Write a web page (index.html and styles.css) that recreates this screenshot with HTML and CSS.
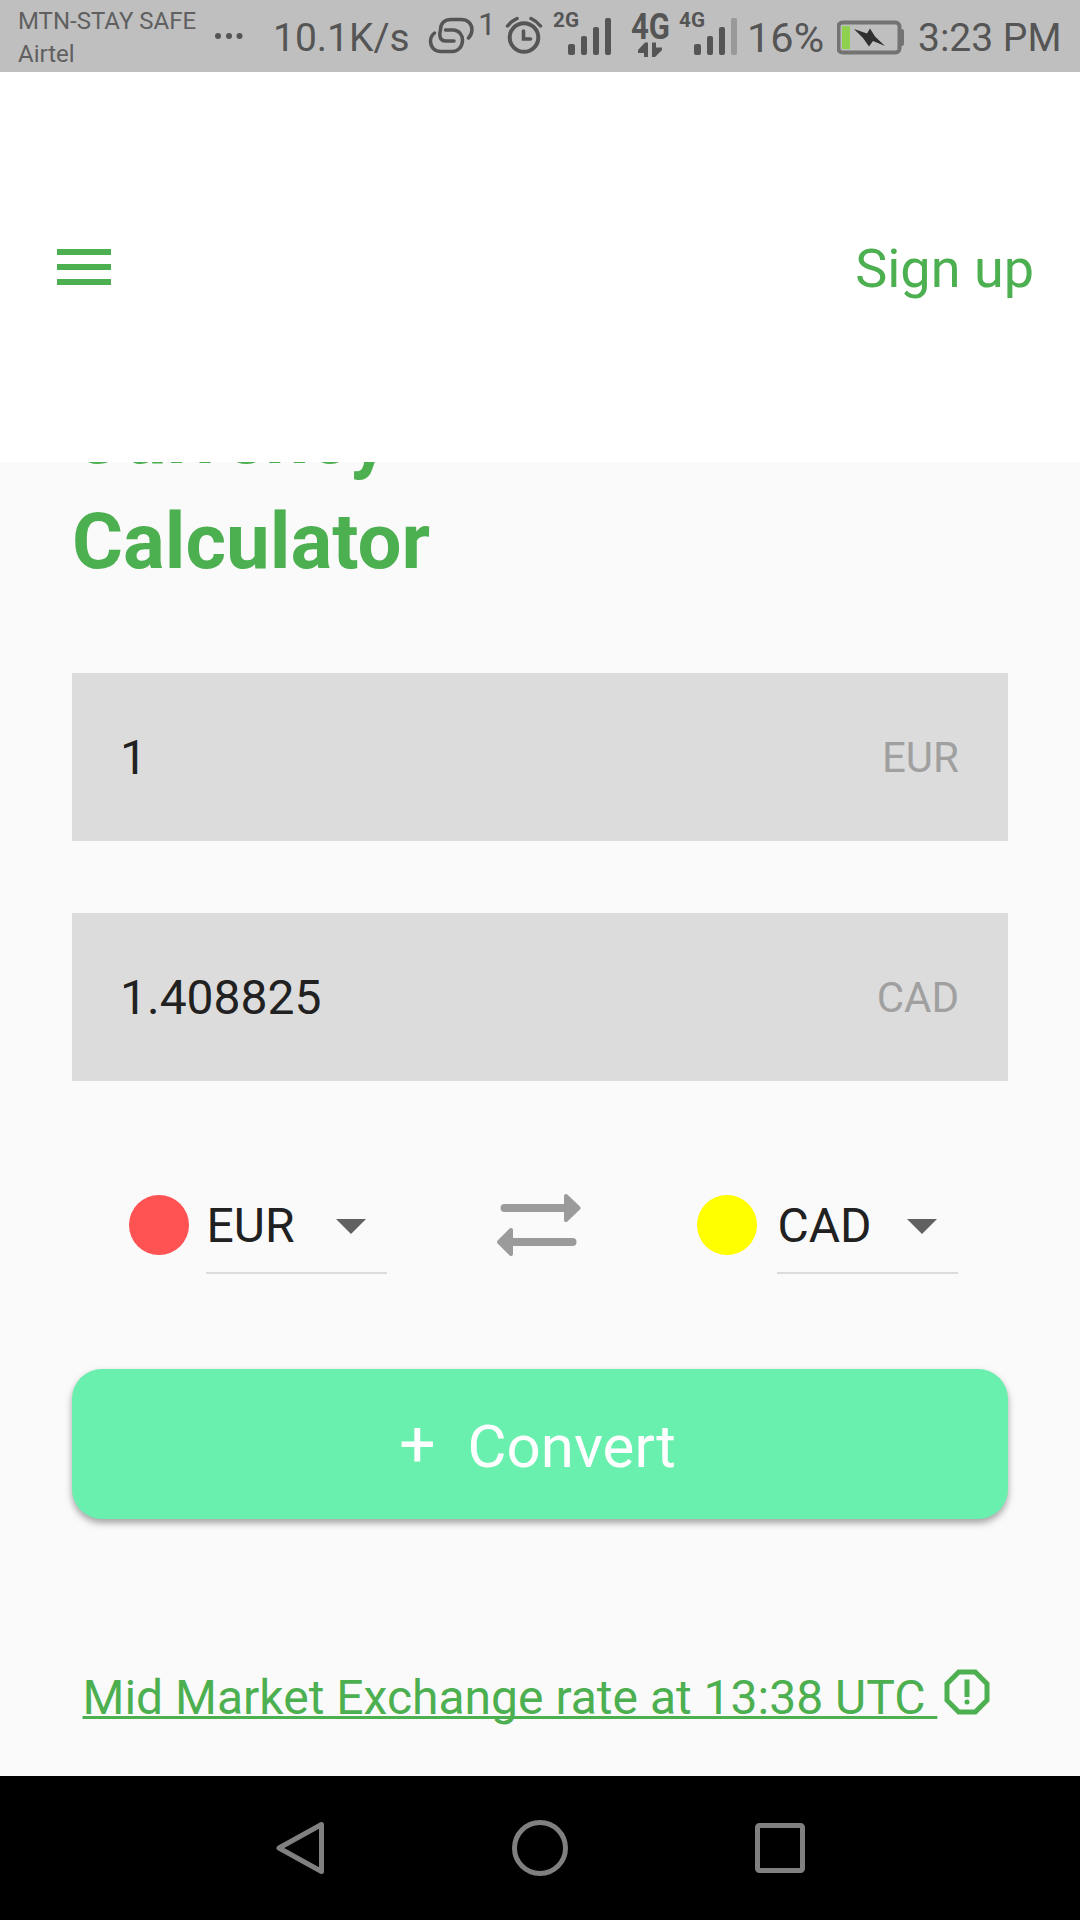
FILE: index.html
```html
<!DOCTYPE html>
<html lang="en">
<head>
<meta charset="utf-8">
<title>Currency Calculator</title>
<link rel="stylesheet" href="styles.css">
</head>
<body>
<div class="status">
  <div class="carriers"><span>MTN-STAY SAFE</span><span>Airtel</span></div>
  <svg class="dots" width="30" height="72" viewBox="0 0 30 72"><circle cx="4" cy="36" r="3"/><circle cx="15" cy="36" r="3"/><circle cx="25.500" cy="36" r="3"/></svg>
  <span class="speed">10.1K/s</span>
  <svg class="signals" width="318" height="72" viewBox="422 0 318 72">
    <g class="line">
      <path d="M454 41H446C437 41 440.500 30 440.500 30C440.500 23 445 19.500 451 19.500H461C468 19.500 472 24 472 29.500C472 33 470.500 36 468.500 38"/>
      <path d="M445.500 30H453C459 30 462.500 35 462.500 40C462.500 47 458 51.500 452 51.500H441C434 51.500 430.500 46.500 430.500 41C430.500 37.500 432 35 434.500 33"/>
      <circle cx="524" cy="37.500" r="14.300" stroke-width="4"/>
      <path d="M523.500 31V39H530.500" stroke-width="3.600"/>
      <path d="M507.500 26Q511.500 21 517 18.500M540.500 26Q536.500 21 531 18.500"/>
    </g>
    <text class="count" x="478" y="35">1</text>
    <text class="small" x="553" y="27" textLength="26" lengthAdjust="spacingAndGlyphs">2G</text>
    <g>
      <rect x="568" y="44" width="7" height="11" rx="2"/><rect x="581" y="36" width="6" height="19" rx="2"/><rect x="593" y="27" width="6" height="28" rx="2"/><rect x="605" y="18" width="6" height="37" rx="2"/>
    </g>
    <text class="large" x="631" y="38.500" textLength="39" lengthAdjust="spacingAndGlyphs">4G</text>
    <path d="M638 50L645 42.500H648V57H644V53H638Z M652 42.500H656V47.500H662V50L655 57H652Z"/>
    <text class="small" x="679" y="27" textLength="26" lengthAdjust="spacingAndGlyphs">4G</text>
    <rect x="694" y="44" width="7" height="11" rx="2"/><rect x="707" y="36" width="6" height="19" rx="2"/><rect x="719" y="27" width="6" height="28" rx="2"/><rect class="faint" x="731" y="18" width="6" height="37" rx="2"/>
  </svg>
  <span class="percent">16%</span>
  <svg class="battery" width="68" height="72" viewBox="837 0 68 72">
    <rect x="838.500" y="22.500" width="61" height="30" rx="4" fill="none" stroke="#737373" stroke-width="4"/>
    <path d="M901 29H902Q904 29 904 32V43Q904 46 902 46H901Z" fill="#737373"/>
    <path d="M842 26H850V49H842Z" fill="#8fd14f"/>
    <path d="M854 29L867 33.500L870 28.500L875 36.500L885 46L873 41L869 46.500L863 38Z" fill="#303030"/>
  </svg>
  <span class="clock">3:23 PM</span>
</div>

<header class="appbar">
  <svg width="54" height="36" viewBox="0 0 54 36"><path d="M0 0H54V6H0ZM0 15H54V21H0ZM0 30H54V36H0Z"/></svg>
  <a class="signup">Sign up</a>
</header>

<main class="content">
  <h1 class="title">Currency<br>Calculator</h1>
  <div class="field"><span class="value">1</span><span class="unit">EUR</span></div>
  <div class="field"><span class="value">1.408825</span><span class="unit">CAD</span></div>
  <div class="pickers">
    <div class="picker">
      <span class="dot red"></span>
      <div class="select"><span>EUR</span><svg width="30" height="15" viewBox="0 0 30 15"><path d="M0 0H30L15 15Z"/></svg></div>
    </div>
    <svg class="swap" width="84" height="62" viewBox="0 0 84 62">
      <path d="M7.500 14H68M16 48H75.500" fill="none" stroke="#9b9b9b" stroke-width="8" stroke-linecap="round"/>
      <path d="M69 2L81.500 14L69 26ZM14 36L2 48L14 60Z" stroke="#9b9b9b" stroke-width="4" stroke-linejoin="round"/>
    </svg>
    <div class="picker wide">
      <span class="dot yellow"></span>
      <div class="select"><span>CAD</span><svg width="30" height="15" viewBox="0 0 30 15"><path d="M0 0H30L15 15Z"/></svg></div>
    </div>
  </div>
  <button class="convert"><span class="plus">+</span><span class="label">Convert</span></button>
  <div class="rate">
    <a class="link">Mid Market Exchange rate at 13:38 UTC </a>
    <svg width="60" height="60" viewBox="0 0 24 24"><path d="M15.730 3H8.270L3 8.270v7.460L8.270 21h7.460L21 15.730V8.270L15.730 3zM19 14.900L14.900 19H9.100L5 14.900V9.100L9.100 5h5.800L19 9.100v5.800z"/><circle cx="12" cy="16" r="1"/><path d="M11 7h2v7h-2z"/></svg>
  </div>
</main>

<nav class="navbar">
  <svg width="50" height="56" viewBox="0 0 50 56"><path d="M46.500 4.500V51.500L4 28Z"/></svg>
  <svg width="56" height="56" viewBox="0 0 56 56"><circle cx="28" cy="28" r="25.500"/></svg>
  <svg width="50" height="50" viewBox="0 0 50 50"><rect x="2.500" y="2.500" width="45" height="45" rx="2"/></svg>
</nav>
</body>
</html>
```
FILE: styles.css
```css
* { box-sizing: border-box; }
body {
  margin: 0;
  width: 1080px;
  height: 1920px;
  overflow: hidden;
  display: flex;
  flex-direction: column;
  background: #fafafa;
  font-family: Roboto, sans-serif;
  white-space: nowrap;
}
svg { display: block; flex: none; }

.status {
  flex: none;
  display: flex;
  height: 72px;
  background: #bfbfbf;
  color: #555;
  fill: #555;
  line-height: 72px;
}
.carriers {
  display: flex;
  flex-direction: column;
  width: 199px;
  margin-left: 18px;
  padding-top: 5px;
  font-size: 24px;
  line-height: 33px;
  color: #606060;
}
.dots { margin-left: -3px; }
.speed { width: 149px; margin-left: 29px; font-size: 39px; padding-top: 2px; }
.line { fill: none; stroke: #555; stroke-width: 3.500; stroke-linecap: round; }
.count { font-size: 32px; font-weight: 400; }
.small { font-size: 21px; font-weight: 700; }
.large { font-size: 37px; font-weight: 700; }
.faint { fill: #999; }
.percent { width: 90px; margin-left: 7px; font-size: 41.500px; padding-top: 2px; }
.clock { margin-left: 13px; font-size: 39px; padding-top: 2px; }

.appbar {
  flex: none;
  display: flex;
  justify-content: space-between;
  align-items: center;
  height: 390px;
  padding: 0 46px 0 57px;
  background: #fff;
  color: #4caf50;
  fill: #4caf50;
}
.signup { font-size: 54px; line-height: 64px; padding-top: 4px; }

.content {
  flex: none;
  height: 1314px;
  padding: 0 72px;
  overflow: hidden;
}
.title {
  margin: -78px 0 79px;
  font-size: 78px;
  font-weight: 700;
  line-height: 105px;
  color: #4caf50;
}
.field {
  display: flex;
  justify-content: space-between;
  align-items: center;
  height: 168px;
  margin-bottom: 72px;
  padding: 0 49px 0 48px;
  background: #dcdcdc;
}
.value { font-size: 48px; color: #212121; }
.unit { font-size: 42px; color: #a0a0a0; }

.pickers {
  display: flex;
  justify-content: space-between;
  height: 81px;
  padding: 0 50px 0 56.500px;
  margin-top: 113px;
}
.picker { display: flex; gap: 17.500px; }
.wide { gap: 20.500px; }
.dot { width: 60px; height: 60px; margin-top: 1px; border-radius: 50%; }
.red { background: #ff5252; }
.yellow { background: #ff0; }
.select {
  display: flex;
  justify-content: space-between;
  align-items: flex-start;
  width: 181px;
  height: 80px;
  padding: 0 21.500px 0 .500px;
  border-bottom: 2px solid #dbdbdb;
  font-size: 48px;
  line-height: 64px;
  color: #212121;
  fill: #616161;
}
.select svg { margin-top: 25px; }
.swap { margin-left: -5px; fill: #9b9b9b; }

.convert {
  display: flex;
  align-items: center;
  justify-content: center;
  gap: 32px;
  width: 936px;
  height: 150px;
  margin-top: 94px;
  padding: 0 5px 0 0;
  border: 0;
  border-radius: 30px;
  background: #69f0ae;
  box-shadow: 0 4px 7px rgba(0, 0, 0, .35);
  color: #fff;
  font: 400 60px/70px Roboto, sans-serif;
}
.plus { padding-top: 2px; font-size: 64px; }
.label { padding-top: 6px; }

.rate {
  display: flex;
  margin: 143px 0 0 10.500px;
  color: #4caf50;
  fill: #4caf50;
}
.link {
  width: 854.500px;
  padding-top: 8px;
  font-size: 48px;
  line-height: 56px;
  white-space: pre;
  text-decoration: underline;
  text-decoration-thickness: 2.500px;
  text-decoration-skip-ink: none;
  text-underline-offset: 2px;
}

.navbar {
  flex: none;
  display: flex;
  justify-content: space-between;
  align-items: center;
  height: 144px;
  padding: 0 275px 0 275px;
  background: #000;
  fill: none;
  stroke: #808080;
  stroke-width: 5;
  stroke-linejoin: round;
}
```
